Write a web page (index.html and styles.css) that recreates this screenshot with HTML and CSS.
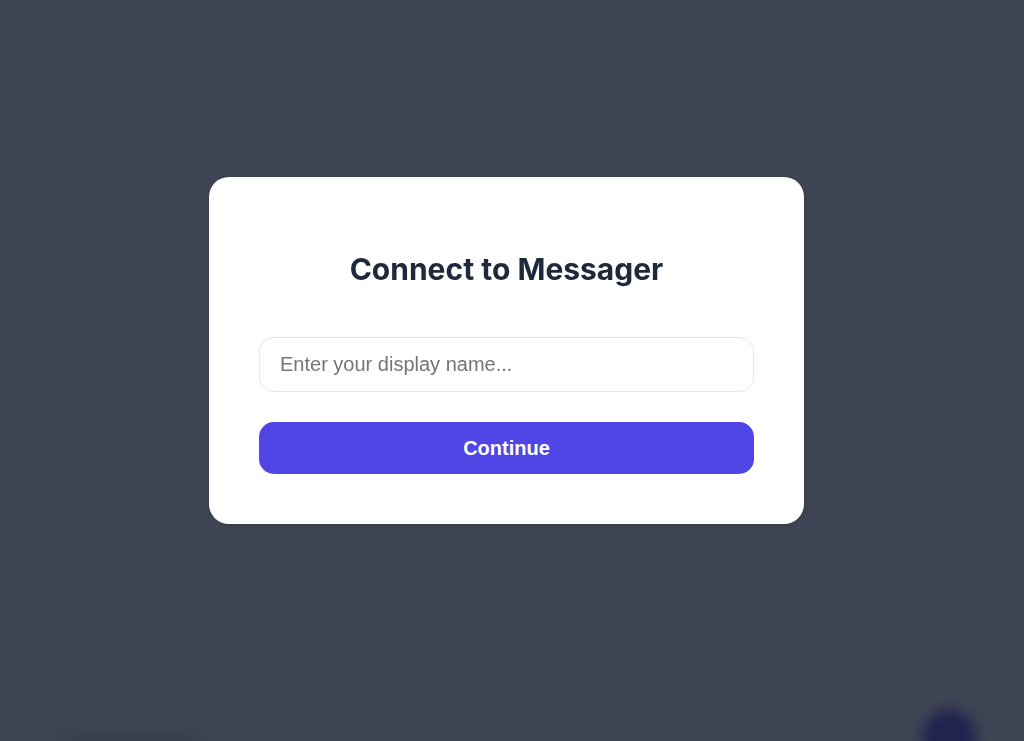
FILE: index.html
```html
<!DOCTYPE html>
<html lang="en">
<head>
  <meta charset="utf-8">
  <meta name="viewport" content="width=device-width, initial-scale=1">
  <title>Messager</title>
  <link rel="stylesheet" href="styles.css">
</head>
<body>
  <div class="backdrop" aria-hidden="true">
    <div class="composer">
      <span class="composer-text"></span>
      <span class="composer-send"></span>
    </div>
  </div>
  <main class="overlay">
    <form class="card">
      <h1 class="title">Connect to Messager</h1>
      <input class="name-input" type="text" aria-label="Display name" placeholder="Enter your display name...">
      <button class="continue" type="button">Continue</button>
    </form>
  </main>
</body>
</html>
```

FILE: styles.css
```css
* {
  box-sizing: border-box;
}

body {
  margin: 0;
  min-height: 100vh;
  display: grid;
  overflow: hidden;
  background: #404555;
  font-family: Inter, "Liberation Sans", sans-serif;
}

/* Blurred chat screen behind the dialog */
.backdrop {
  position: fixed;
  inset: 0;
  display: flex;
  align-items: flex-end;
  overflow: hidden;
}

.composer {
  flex: 1;
  display: flex;
  align-items: flex-start;
  justify-content: space-between;
  height: 32px;
  padding: 0 48px 0 58px;
}

.composer-text {
  width: 146px;
  height: 24px;
  margin-top: 22px;
  background: #3a3f50;
  filter: blur(8px);
}

.composer-send {
  flex: none;
  width: 54px;
  height: 60px;
  border-radius: 27px;
  background: #20244f;
  filter: blur(7px);
}

.overlay {
  position: relative;
  display: flex;
  align-items: center;
  justify-content: center;
  padding: 0 11px 40px 0;
}

.card {
  display: flex;
  flex-direction: column;
  width: 595px;
  max-width: 92%;
  padding: 74px 50px 50px;
  border-radius: 20px;
  background: #fff;
  box-shadow: 0 1px 4px rgba(0, 0, 0, 0.2);
}

.title {
  margin: 0 0 50px;
  color: #1e293b;
  font-size: 30px;
  font-weight: 700;
  line-height: 36px;
  text-align: center;
}

.name-input {
  width: 100%;
  height: 55px;
  margin-bottom: 30px;
  padding: 0 20px;
  border: 1px solid #e2e8f0;
  border-radius: 15px;
  background: #fff;
  color: #1e293b;
  font: 20px "Liberation Sans", Arial, sans-serif;
}

.name-input::placeholder {
  color: #757575;
  opacity: 1;
}

.continue {
  width: 100%;
  height: 52px;
  padding: 0;
  border: 0;
  border-radius: 15px;
  background: #4f46e5;
  color: #fff;
  font: 700 20px "Liberation Sans", Arial, sans-serif;
  cursor: pointer;
}
```
